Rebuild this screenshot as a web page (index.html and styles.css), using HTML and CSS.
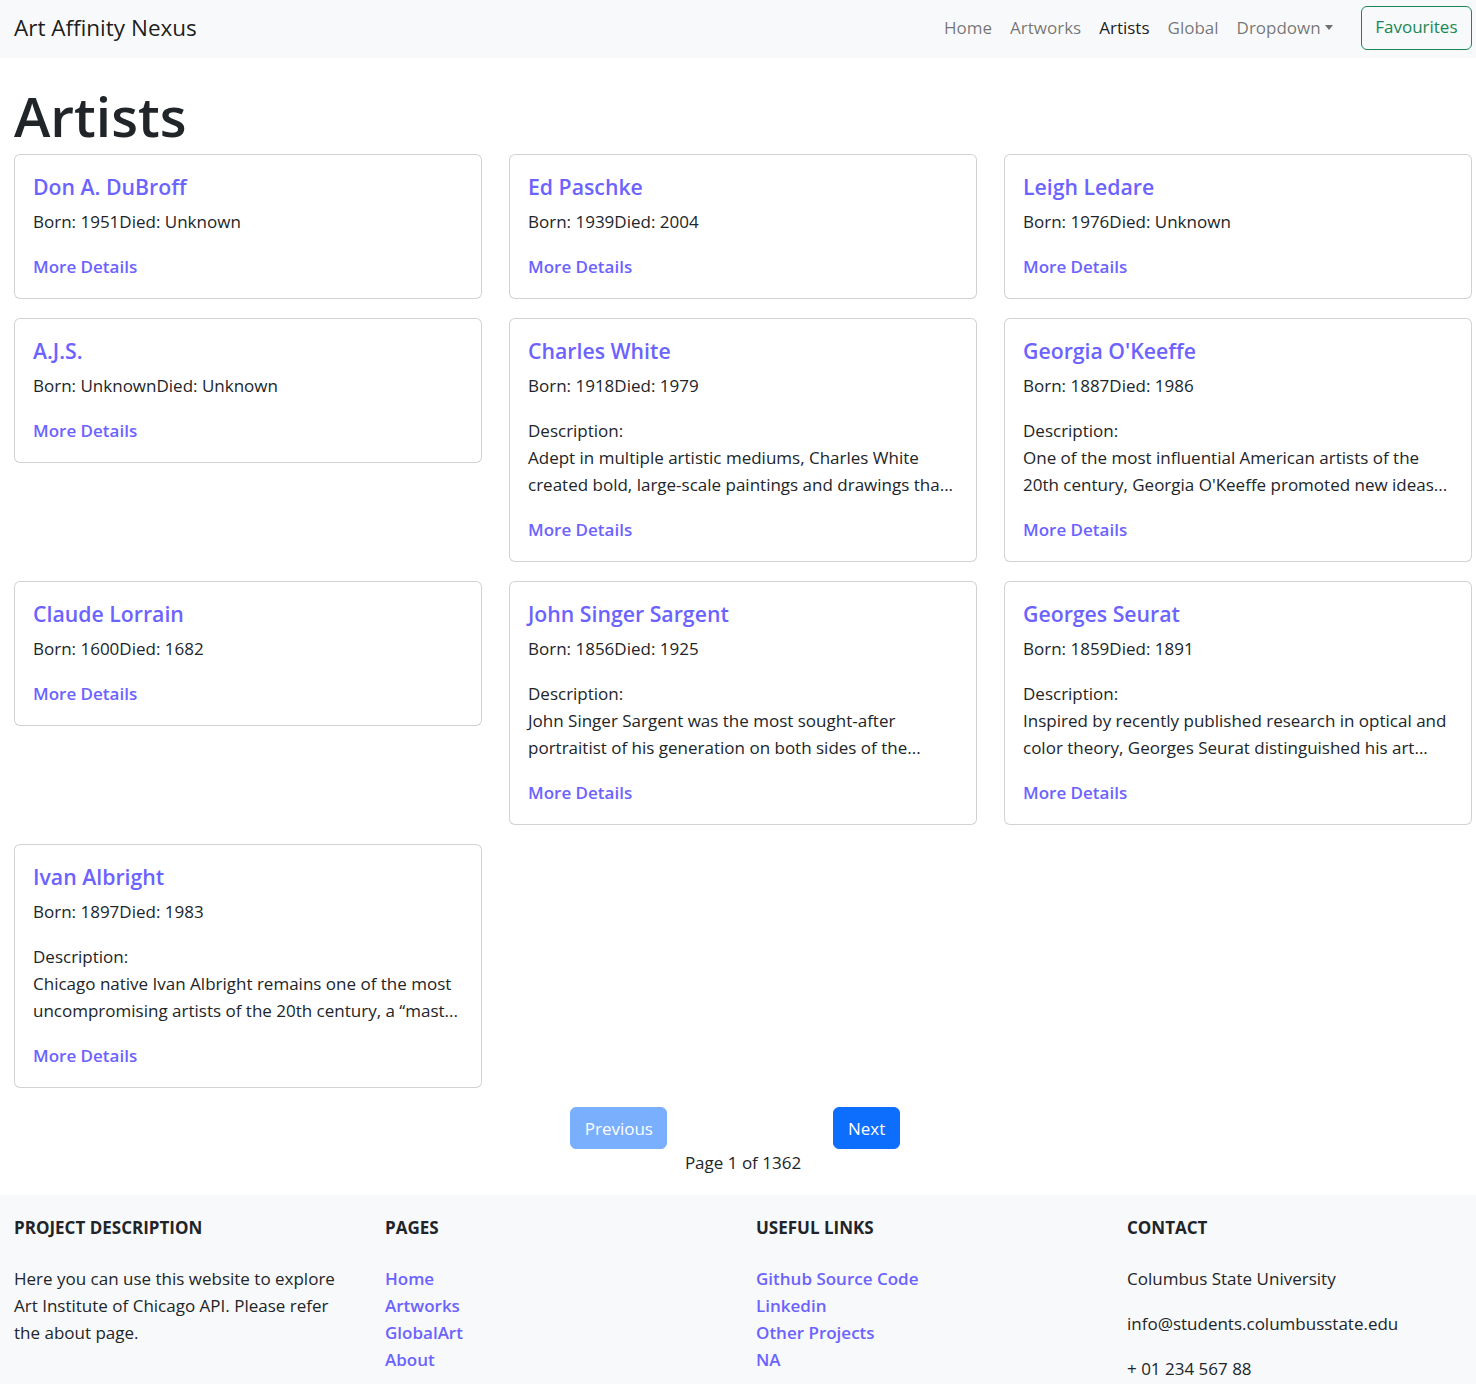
FILE: index.html
```html
<!DOCTYPE html>
<html lang="en">
<head>
<meta charset="utf-8">
<title>Art Affinity Nexus - Artists</title>
<link rel="stylesheet" href="styles.css">
</head>
<body>
<nav class="navbar">
  <a class="brand" href="#">Art Affinity Nexus</a>
  <div class="nav-right">
    <ul class="nav-links">
      <li><a class="nav-link" href="#">Home</a></li>
      <li><a class="nav-link" href="#">Artworks</a></li>
      <li><a class="nav-link active" href="#">Artists</a></li>
      <li><a class="nav-link" href="#">Global</a></li>
      <li><a class="nav-link dropdown-toggle" href="#">Dropdown</a></li>
    </ul>
    <button class="btn-fav" type="button">Favourites</button>
  </div>
</nav>

<main class="main">
  <h1 class="page-title">Artists</h1>
  <div class="card-grid">
    <div class="card">
      <h5 class="card-title">Don A. DuBroff</h5>
      <p class="card-text">Born: 1951Died: Unknown</p>
      <a class="card-link" href="#">More Details</a>
    </div>
    <div class="card">
      <h5 class="card-title">Ed Paschke</h5>
      <p class="card-text">Born: 1939Died: 2004</p>
      <a class="card-link" href="#">More Details</a>
    </div>
    <div class="card">
      <h5 class="card-title">Leigh Ledare</h5>
      <p class="card-text">Born: 1976Died: Unknown</p>
      <a class="card-link" href="#">More Details</a>
    </div>
    <div class="card">
      <h5 class="card-title">A.J.S.</h5>
      <p class="card-text">Born: UnknownDied: Unknown</p>
      <a class="card-link" href="#">More Details</a>
    </div>
    <div class="card">
      <h5 class="card-title">Charles White</h5>
      <p class="card-text">Born: 1918Died: 1979</p>
      <p class="card-text">Description:<br>Adept in multiple artistic mediums, Charles White created bold, large-scale paintings and drawings tha...</p>
      <a class="card-link" href="#">More Details</a>
    </div>
    <div class="card">
      <h5 class="card-title">Georgia O'Keeffe</h5>
      <p class="card-text">Born: 1887Died: 1986</p>
      <p class="card-text">Description:<br>One of the most influential American artists of the 20th century, Georgia O'Keeffe promoted new ideas...</p>
      <a class="card-link" href="#">More Details</a>
    </div>
    <div class="card">
      <h5 class="card-title">Claude Lorrain</h5>
      <p class="card-text">Born: 1600Died: 1682</p>
      <a class="card-link" href="#">More Details</a>
    </div>
    <div class="card">
      <h5 class="card-title">John Singer Sargent</h5>
      <p class="card-text">Born: 1856Died: 1925</p>
      <p class="card-text">Description:<br>John Singer Sargent was the most sought-after portraitist of his generation on both sides of the...</p>
      <a class="card-link" href="#">More Details</a>
    </div>
    <div class="card">
      <h5 class="card-title">Georges Seurat</h5>
      <p class="card-text">Born: 1859Died: 1891</p>
      <p class="card-text">Description:<br>Inspired by recently published research in optical and color theory, Georges Seurat distinguished his art...</p>
      <a class="card-link" href="#">More Details</a>
    </div>
    <div class="card">
      <h5 class="card-title">Ivan Albright</h5>
      <p class="card-text">Born: 1897Died: 1983</p>
      <p class="card-text">Description:<br>Chicago native Ivan Albright remains one of the most uncompromising artists of the 20th century, a “mast...</p>
      <a class="card-link" href="#">More Details</a>
    </div>
  </div>

  <div class="pager">
    <button class="btn-primary disabled" type="button">Previous</button>
    <button class="btn-primary" type="button">Next</button>
  </div>
  <p class="page-info">Page 1 of 1362</p>
</main>

<footer class="footer">
  <div class="footer-col">
    <h6 class="footer-heading">Project Description</h6>
    <p class="footer-text">Here you can use this website to explore Art Institute of Chicago API. Please refer the about page.</p>
  </div>
  <div class="footer-col">
    <h6 class="footer-heading">Pages</h6>
    <ul class="footer-links">
      <li><a href="#">Home</a></li>
      <li><a href="#">Artworks</a></li>
      <li><a href="#">GlobalArt</a></li>
      <li><a href="#">About</a></li>
    </ul>
  </div>
  <div class="footer-col">
    <h6 class="footer-heading">Useful links</h6>
    <ul class="footer-links">
      <li><a href="#">Github Source Code</a></li>
      <li><a href="#">Linkedin</a></li>
      <li><a href="#">Other Projects</a></li>
      <li><a href="#">NA</a></li>
    </ul>
  </div>
  <div class="footer-col">
    <h6 class="footer-heading">Contact</h6>
    <p class="footer-contact">Columbus State University</p>
    <p class="footer-contact">info@students.columbusstate.edu</p>
    <p class="footer-contact">+ 01 234 567 88</p>
  </div>
</footer>
</body>
</html>
```
FILE: styles.css
```css
* { box-sizing: border-box; }

html { overflow: hidden; }

body {
  margin: 0;
  font-family: "Open Sans", "Noto Sans", sans-serif;
  font-size: 17px;
  line-height: 27px;
  color: #212529;
  background: #fff;
}

a { text-decoration: none; }

/* Navbar */
.navbar {
  height: 58px;
  background: #f8f9fa;
  display: flex;
  align-items: center;
  justify-content: space-between;
  padding: 0 4px 3px 14px;
}

.brand {
  font-size: 22.5px;
  line-height: 30px;
  font-weight: 500;
  color: rgba(0, 0, 0, 0.9);
}

.nav-right {
  display: flex;
  align-items: center;
}

.nav-links {
  list-style: none;
  margin: 0;
  padding: 0;
  display: flex;
}

.nav-link {
  display: block;
  padding: 0 9px;
  color: rgba(0, 0, 0, 0.55);
}

.nav-link.active { color: rgba(0, 0, 0, 0.9); }

.dropdown-toggle::after {
  content: "";
  display: inline-block;
  margin-left: 4px;
  vertical-align: 4px;
  border-top: 5px solid;
  border-left: 4.5px solid transparent;
  border-right: 4.5px solid transparent;
}

.btn-fav {
  margin-left: 19px;
  margin-top: 1px;
  height: 44px;
  padding: 0 13.5px 3px;
  font: inherit;
  color: #198754;
  background: transparent;
  border: 1px solid #198754;
  border-radius: 6px;
}

/* Main */
.main {
  padding: 0 4px 0 14px;
}

.page-title {
  margin: 22px 0 3px;
  font-size: 55px;
  line-height: 71px;
  font-weight: 600;
}

.card-grid {
  display: grid;
  grid-template-columns: repeat(3, 1fr);
  column-gap: 27px;
  row-gap: 19px;
  align-items: start;
}

.card {
  border: 1px solid rgba(0, 0, 0, 0.175);
  border-radius: 6px;
  padding: 18px;
  background: #fff;
}

.card-title {
  margin: 0 0 8px;
  font-size: 21.25px;
  line-height: 27px;
  font-weight: 600;
  color: #6c63ff;
}

.card-text {
  margin: 0 0 18px;
}

.card-link {
  display: block;
  color: #6c63ff;
  font-weight: 600;
}

.pager {
  display: flex;
  justify-content: center;
  gap: 166px;
  margin-top: 19px;
  padding-right: 16px;
}

.btn-primary {
  height: 42px;
  padding: 0 13.5px;
  font: inherit;
  color: #fff;
  background: #0d6efd;
  border: 1px solid #0d6efd;
  border-radius: 6px;
}

.btn-primary.disabled { opacity: 0.55; }

.page-info {
  margin: 0 0 19px;
  text-align: center;
}

/* Footer */
.footer {
  background: #f8f9fa;
  padding: 19px 0 0 14px;
  display: grid;
  grid-template-columns: 371px 371px 371px 1fr;
  height: 189px;
}

.footer-heading {
  margin: 0 0 24px;
  font-size: 17px;
  line-height: 27px;
  font-weight: 700;
  text-transform: uppercase;
}

.footer-text {
  margin: 0;
  max-width: 340px;
}

.footer-links {
  list-style: none;
  margin: 0;
  padding: 0;
}

.footer-links a {
  color: #6c63ff;
  font-weight: 600;
}

.footer-contact {
  margin: 0 0 18px;
}
```
